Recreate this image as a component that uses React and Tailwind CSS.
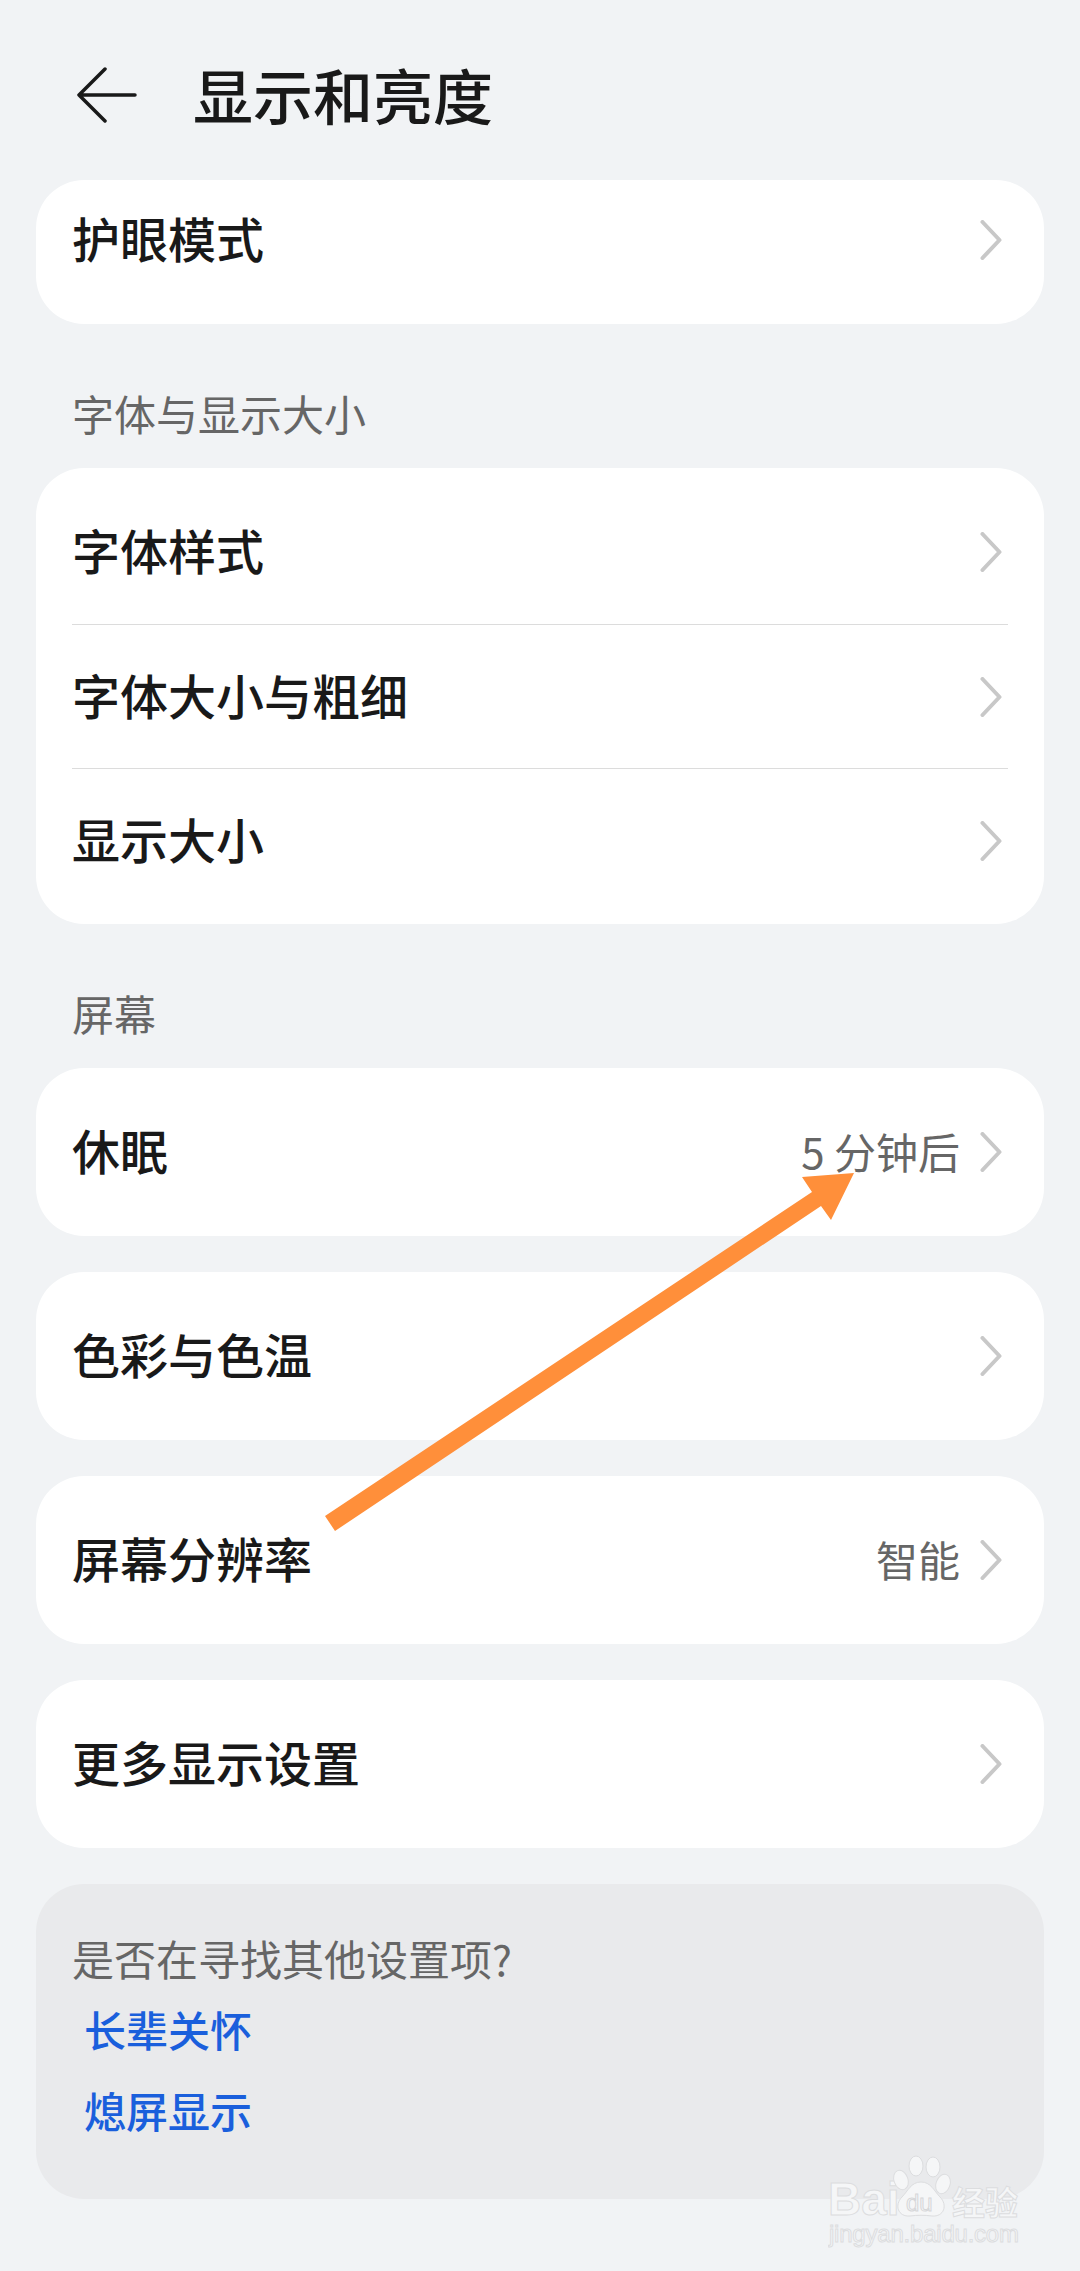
import React from 'react';

const FONT = "font-['Noto_Sans_CJK_SC','Noto_Sans',sans-serif]";

const Chevron = () => (
  <svg width="22" height="40" viewBox="0 0 22 40" fill="none" className="shrink-0">
    <path d="M2.5 2 L19.5 20 L2.5 38" stroke="#c8c8c8" strokeWidth="4" strokeLinecap="round" strokeLinejoin="round" />
  </svg>
);

const Row = ({ title, value, className = 'h-[144px]' }) => (
  <div className={`flex items-center justify-between pl-9 pr-[42px] ${className}`}>
    <span className="pb-[6px] text-[48px] leading-none font-medium text-[#191919]">{title}</span>
    <div className="flex items-center gap-5">
      {value && <span className="pb-[3px] text-[42px] leading-none text-[#666666]">{value}</span>}
      <Chevron />
    </div>
  </div>
);

const SectionLabel = ({ children }) => (
  <div className="flex h-[144px] items-end pb-[29px] pl-9 text-[42px] leading-[52px] text-[#666666]">
    {children}
  </div>
);

const Card = ({ title, value }) => (
  <div className="rounded-[48px] bg-white">
    <Row title={title} value={value} className="h-[168px]" />
  </div>
);

const Watermark = () => (
  <svg width="200" height="96" viewBox="0 0 200 96" className="absolute left-[828px] top-[2155px]">
    <g fill="#f5f6f7" stroke="#dcdddf" strokeWidth="1">
      <text x="0" y="60" fontFamily="'Liberation Sans',sans-serif" fontWeight="700" fontSize="46">Bai</text>
      <text x="124" y="60" fontFamily="'Noto Sans CJK SC',sans-serif" fontWeight="700" fontSize="33">经验</text>
      <text x="1" y="87" fontFamily="'Liberation Sans',sans-serif" fontSize="24" textLength="190">jingyan.baidu.com</text>
      <ellipse cx="88" cy="11" rx="7" ry="10" />
      <ellipse cx="105" cy="12" rx="7" ry="10" />
      <ellipse cx="73" cy="25" rx="7" ry="10" transform="rotate(-20 73 25)" />
      <ellipse cx="115" cy="29" rx="7" ry="10" transform="rotate(20 115 29)" />
      <path d="M93 27 C103 27 106 36 112 42 C120 50 116 62 104 61 C96 60 90 60 82 61 C70 62 66 50 74 42 C80 36 83 27 93 27 Z" />
    </g>
    <text x="78" y="56" fontFamily="'Liberation Sans',sans-serif" fontSize="24" fill="#f5f6f7" stroke="#d6d7d9" strokeWidth="1">du</text>
  </svg>
);

export default function App() {
  return (
    <div className={`relative min-h-[2271px] w-[1080px] overflow-hidden bg-[#f1f3f5] px-9 ${FONT}`}>
      {/* Header */}
      <div className="flex h-[180px] items-center pt-[10px] pl-[41px]">
        <svg width="60" height="56" viewBox="0 0 60 56" fill="none" className="shrink-0">
          <path d="M28 2 L2 28 L28 54 M2 28 H58" stroke="#191919" strokeWidth="3.5" strokeLinecap="round" strokeLinejoin="round" />
        </svg>
        <h1 className="ml-[56px] pb-[3px] text-[60px] leading-none font-medium text-[#191919]">显示和亮度</h1>
      </div>

      <div className="rounded-[48px] bg-white pb-6">
        <Row title="护眼模式" className="h-[120px]" />
      </div>

      <SectionLabel>字体与显示大小</SectionLabel>
      <div className="rounded-[48px] bg-white py-3">
        <Row title="字体样式" />
        <div className="mx-9 h-px bg-[#dcdcdc]" />
        <Row title="字体大小与粗细" className="h-[143px]" />
        <div className="mx-9 h-px bg-[#dcdcdc]" />
        <Row title="显示大小" className="h-[143px]" />
      </div>

      <SectionLabel>屏幕</SectionLabel>
      <div className="flex flex-col gap-9">
        <Card title="休眠" value="5 分钟后" />
        <Card title="色彩与色温" />
        <Card title="屏幕分辨率" value="智能" />
        <Card title="更多显示设置" />

        <div className="h-[315px] rounded-[48px] bg-[#e9eaec] pt-[48px] pl-9">
          <div className="text-[42px] leading-[52px] text-[#666666]">是否在寻找其他设置项?</div>
          <div className="mt-[19px] flex flex-col gap-[29px] pl-3 text-[42px] leading-[52px] font-medium text-[#1a5fdc]">
            <span>长辈关怀</span>
            <span>熄屏显示</span>
          </div>
        </div>
      </div>

      {/* Annotation arrow drawn over the screenshot */}
      <svg width="1080" height="2271" viewBox="0 0 1080 2271" className="pointer-events-none absolute inset-0">
        <polygon points="325,1516 335,1531 821,1206 831,1220 854,1173 802,1177 812,1192" fill="#ff8f3a" />
      </svg>

      <Watermark />
    </div>
  );
}
